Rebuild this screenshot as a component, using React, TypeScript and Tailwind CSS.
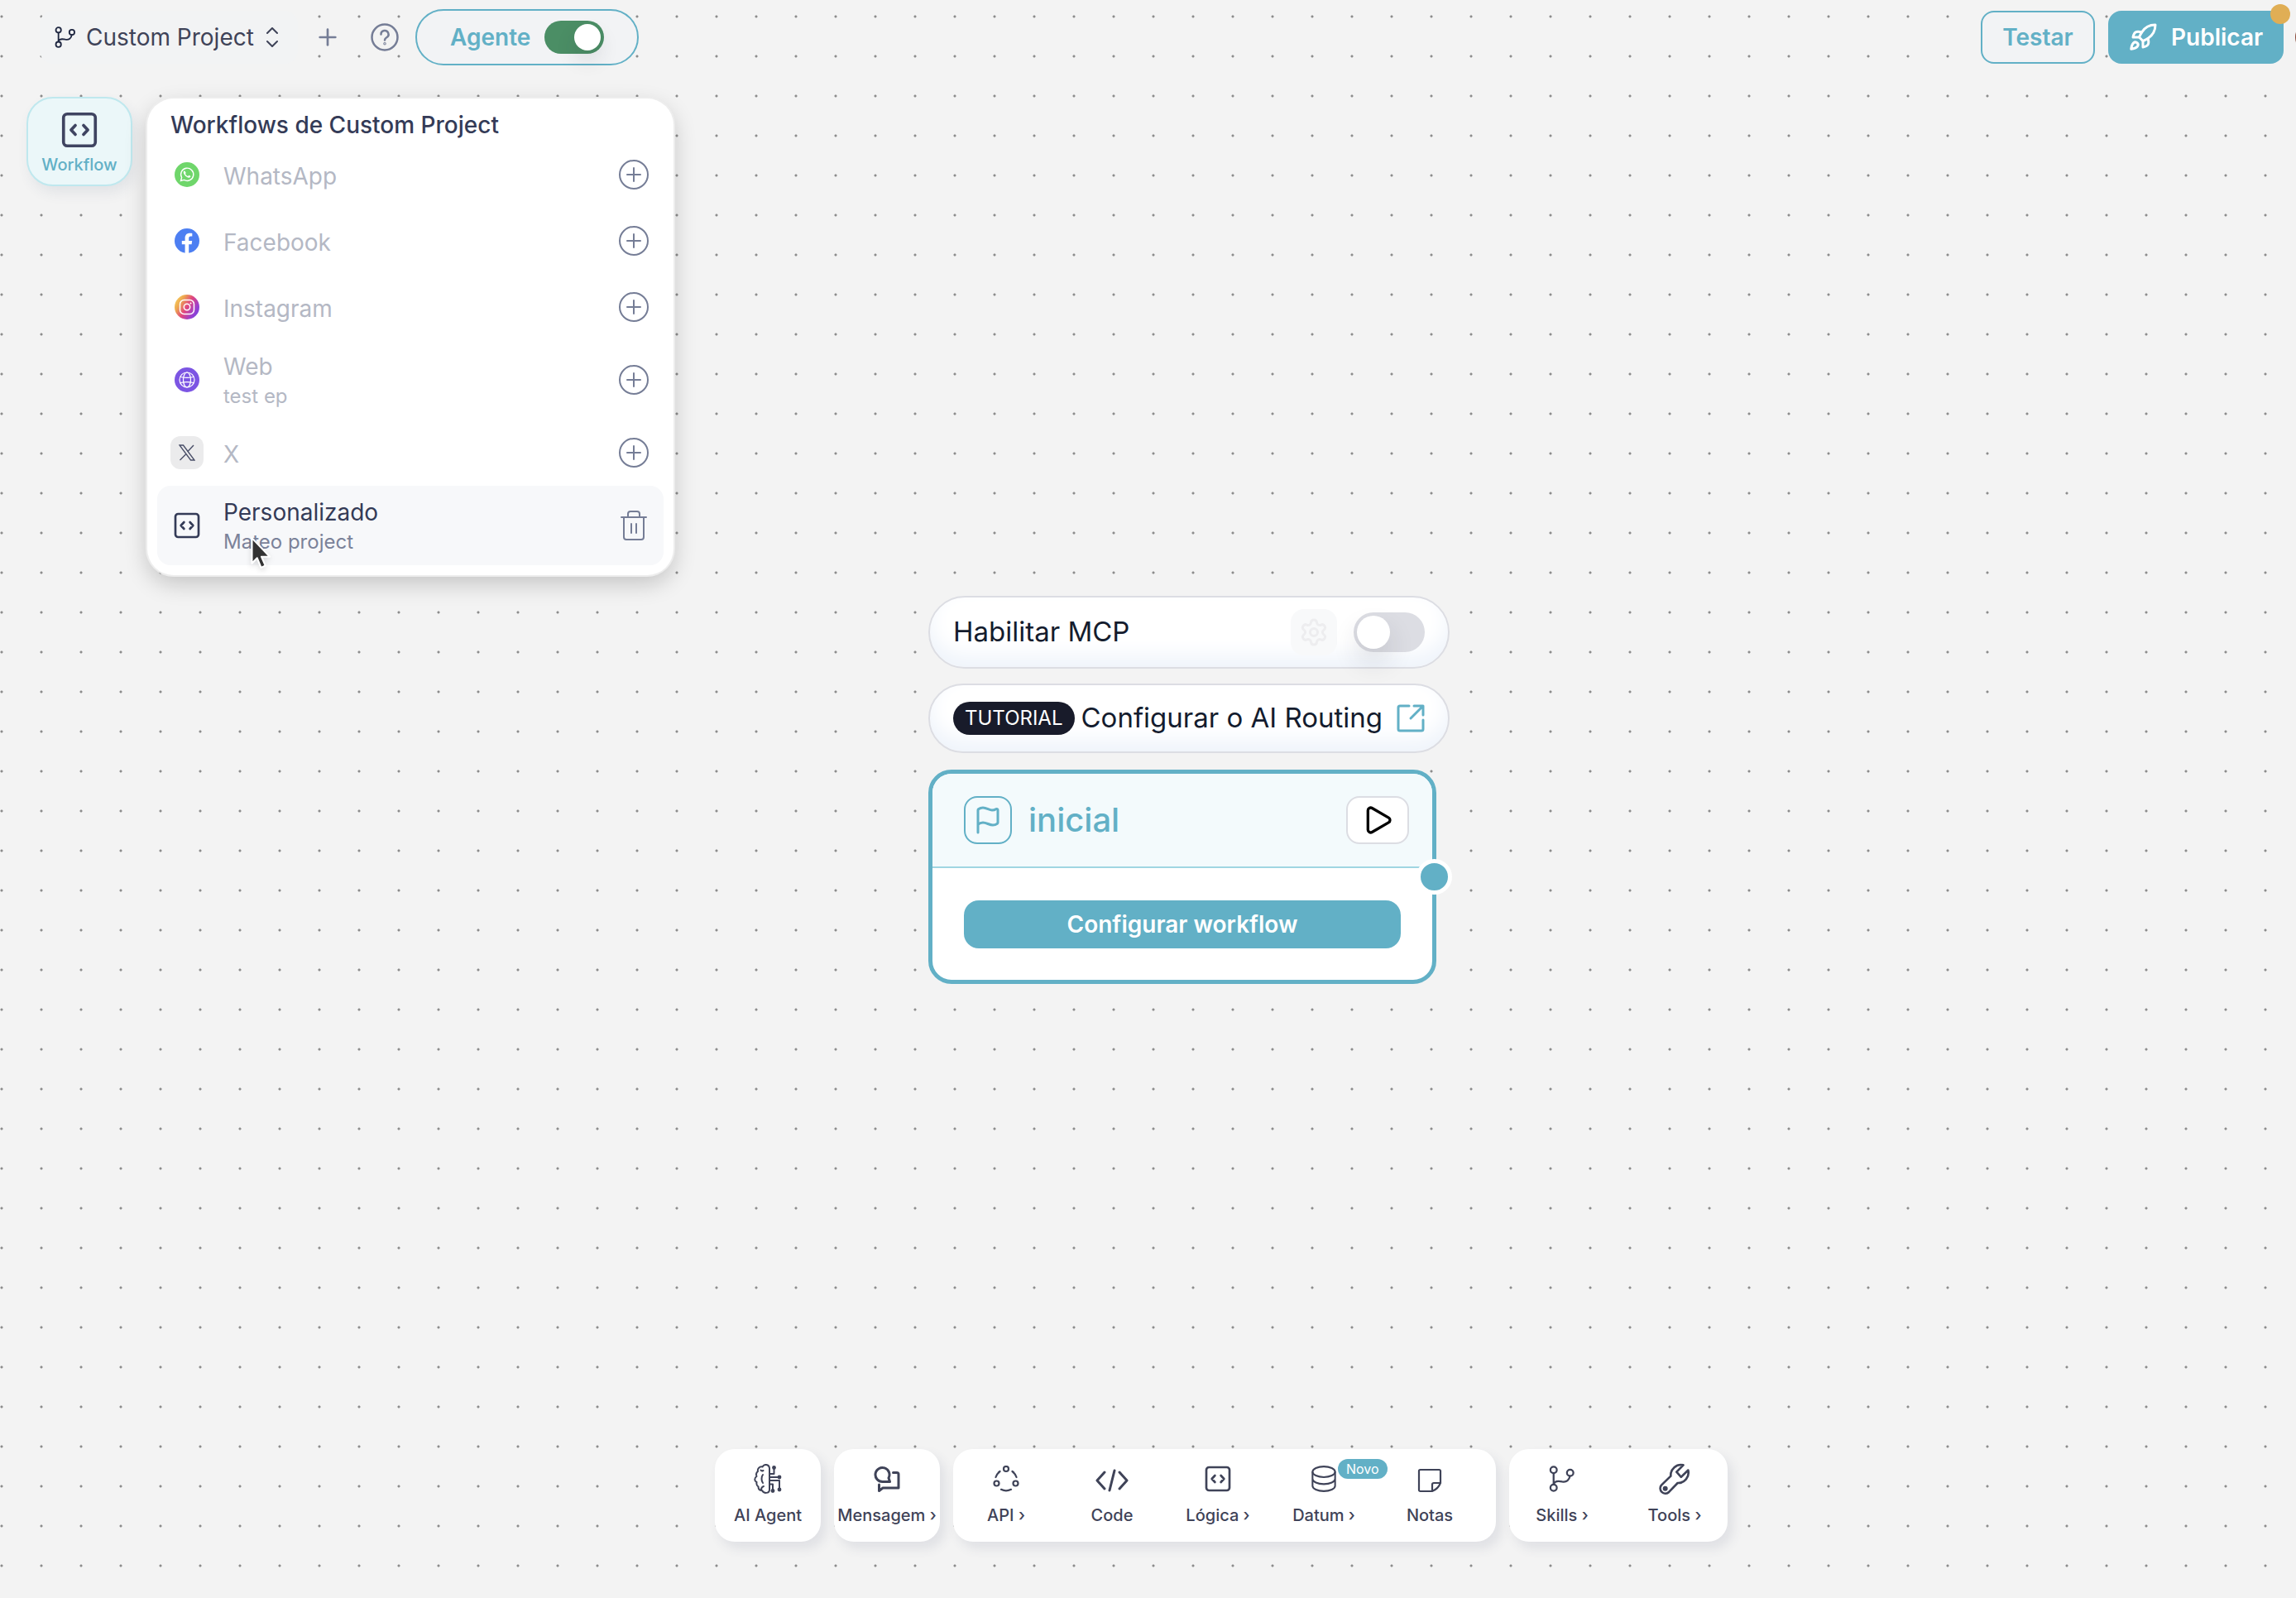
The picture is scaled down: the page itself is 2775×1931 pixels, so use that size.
import { useState } from 'react';
import type { ReactNode } from 'react';
import { Flag, Play, Plus, Rocket, Settings } from 'lucide-react';

type IconProps = { className?: string };

function BranchIcon({ className }: IconProps) {
  return (
    <svg viewBox="0 0 24 24" fill="none" stroke="currentColor" strokeWidth="1.700" strokeLinecap="round" className={className}>
      <circle cx="4.300" cy="4" r="2.900" />
      <circle cx="4.300" cy="20" r="2.900" />
      <circle cx="19.300" cy="6.500" r="2.900" />
      <path d="M4.300 7v10c.7-3.200 4-3.300 7.700-2.500 4.200.8 6.500-1.500 7.100-5" />
    </svg>
  );
}

function CodeBoxIcon({ className }: IconProps) {
  return (
    <svg viewBox="0 0 24 24" fill="none" stroke="currentColor" strokeWidth="2" strokeLinecap="round" strokeLinejoin="round" className={className}>
      <rect x="1.500" y="1.500" width="21" height="21" rx="2.500" />
      <path d="M9.300 9 6.500 12l2.800 3M14.700 9l2.800 3-2.800 3" />
    </svg>
  );
}

function SelectorIcon({ className }: IconProps) {
  return (
    <svg viewBox="0 0 16 24" fill="none" stroke="currentColor" strokeWidth="2" strokeLinecap="round" strokeLinejoin="round" className={className}>
      <path d="m2 7 6-6 6 6M2 17l6 6 6-6" />
    </svg>
  );
}

function HelpIcon({ className }: IconProps) {
  return (
    <svg viewBox="0 0 34 34" fill="none" stroke="currentColor" strokeWidth="2.500" strokeLinecap="round" className={className}>
      <circle cx="17" cy="17" r="15.500" />
      <path d="M12.500 13.500a4.500 4.500 0 1 1 6.800 3.800c-1.600 1-2.300 1.700-2.300 3.200" />
      <circle cx="17" cy="24.800" r=".5" />
    </svg>
  );
}

function AddIcon({ className }: IconProps) {
  return (
    <svg viewBox="0 0 40 40" fill="none" stroke="currentColor" strokeWidth="2" className={className}>
      <circle cx="20" cy="20" r="17" />
      <path d="M20 12v16M12 20h16" strokeLinecap="round" />
    </svg>
  );
}

function TrashIcon({ className }: IconProps) {
  return (
    <svg viewBox="0 0 40 40" fill="none" stroke="currentColor" strokeWidth="2" strokeLinecap="round" strokeLinejoin="round" className={className}>
      <path d="M5 10h30M8 10v24a3 3 0 0 0 3 3h18a3 3 0 0 0 3-3V10M13 10V6a3 3 0 0 1 3-3h8a3 3 0 0 1 3 3v4M17 18v11M23 18v11" />
    </svg>
  );
}

function WhatsAppIcon() {
  return (
    <svg viewBox="0 0 30 30" className="size-[30px]">
      <circle cx="15" cy="15" r="15" fill="#6fd66b" />
      <path d="m7.500 22.500 1.100-4a7.600 7.600 0 1 1 2.900 2.900z" fill="none" stroke="#fff" strokeWidth="1.400" />
      <path d="M12.600 11c-.3-.6-1.200-.6-1.600.1-1.500 2.400 3.400 8 6.500 7.700 1.200-.2 2-1 1.800-2l-2-1.100-1.200 1.200c-1.400-.4-2.600-1.700-3.100-2.900l.8-1z" fill="#fff" />
    </svg>
  );
}

function FacebookIcon() {
  return (
    <svg viewBox="0 0 30 30" className="size-[30px]">
      <circle cx="15" cy="15" r="15" fill="#4d7ff2" />
      <path d="M12.600 30V19.300H8.800v-4.200h3.800v-3.300c0-3.900 2.200-6 5.800-6 1.500 0 2.900.2 2.900.2v3.600h-1.800c-1.700 0-2.300 1.100-2.300 2.200v3.300h4l-.6 4.200h-3.400V30z" fill="#fff" />
    </svg>
  );
}

function InstagramIcon() {
  return (
    <svg viewBox="0 0 30 30" className="size-[30px]">
      <defs>
        <linearGradient id="ig" x1="0" y1=".2" x2="1" y2=".8">
          <stop offset="0" stopColor="#f7cf5f" />
          <stop offset=".22" stopColor="#eda84f" />
          <stop offset=".5" stopColor="#e0457f" />
          <stop offset=".8" stopColor="#9b3fd0" />
          <stop offset="1" stopColor="#6b45e0" />
        </linearGradient>
      </defs>
      <circle cx="15" cy="15" r="15" fill="url(#ig)" />
      <rect x="6.500" y="6.500" width="17" height="17" rx="5" fill="none" stroke="#fff" strokeWidth="1.500" />
      <circle cx="15" cy="15" r="3.700" fill="none" stroke="#fff" strokeWidth="1.500" />
      <circle cx="19.500" cy="10.500" r="1" fill="#fff" />
    </svg>
  );
}

function WebIcon() {
  return (
    <svg viewBox="0 0 30 30" className="size-[30px]">
      <circle cx="15" cy="15" r="15" fill="#7c55e3" />
      <g fill="none" stroke="#fff" strokeWidth="1.200">
        <circle cx="15" cy="15" r="9" />
        <ellipse cx="15" cy="15" rx="4.500" ry="9" />
        <path d="M7 11.500c5 1.200 11 1.200 16 0M7 18.500c5-1.200 11-1.200 16 0" />
      </g>
    </svg>
  );
}

function XIcon() {
  return (
    <span className="flex size-10 items-center justify-center rounded-xl bg-[#ebebec]">
      <svg viewBox="0 0 20 20" fill="none" stroke="#4a4f68" strokeWidth="1.400" className="size-5">
        <path d="M1 1h4.500l13.500 18h-4.500zM18 1l-7.500 8M9 11.500 1.500 19" />
      </svg>
    </span>
  );
}

function BrainIcon({ className }: IconProps) {
  return (
    <svg viewBox="0 0 36 36" fill="none" stroke="currentColor" strokeWidth="2" strokeLinecap="round" strokeLinejoin="round" className={className}>
      <path d="M20 31V5a4.500 4.500 0 0 0-8.500-1.500A4.500 4.500 0 0 0 6 9c-2 1.500-2.500 3.500-1.500 6-3 2-3 5.500 0 7-.5 3 0 4.500 2 5.500 0 3 2 4.500 4.500 4.500 2 4 9 4 9-1z" />
      <path d="M12.500 8c-1 .5-2 1-3-.5M12 13c-2 2.500-2 7.500 0 10M10 31c.2-2 1.200-3.500 3-4" />
      <path d="M20 12h5.500V5.500M20 16h12M20 20h12v10.500M20 24.500h4V31" />
      <g fill="currentColor" stroke="none">
        <circle cx="25.500" cy="4.500" r="2.400" />
        <circle cx="32" cy="16" r="2.400" />
        <circle cx="32" cy="31" r="2.400" />
        <circle cx="24" cy="32.500" r="2.400" />
      </g>
    </svg>
  );
}

function MessageIcon({ className }: IconProps) {
  return (
    <svg viewBox="0 0 32 32" fill="none" stroke="currentColor" strokeWidth="3" strokeLinecap="round" strokeLinejoin="round" className={className}>
      <path d="M19.500 19.500H10.500a8.500 8.500 0 1 1 7.500-4.500z" />
      <path d="M23.500 8.500H28a2 2 0 0 1 2 2V27H11l-4.500 3.500V23" />
    </svg>
  );
}

function ApiIcon({ className }: IconProps) {
  return (
    <svg viewBox="0 0 32 32" fill="none" stroke="currentColor" strokeWidth="2.200" strokeLinecap="round" className={className}>
      <circle cx="16" cy="4" r="3" />
      <circle cx="4.500" cy="21.500" r="3" />
      <circle cx="27.500" cy="21.500" r="3" />
      <path d="M3.500 14c1-3 2.500-5.200 5-7M28.500 14c-1-3-2.500-5.200-5-7M10 28.800c4 2 8 2 12 0" />
    </svg>
  );
}

function CodeIcon({ className }: IconProps) {
  return (
    <svg viewBox="0 0 40 32" fill="none" stroke="currentColor" strokeWidth="3" strokeLinecap="round" strokeLinejoin="round" className={className}>
      <path d="M11 8 2 18l9 10M29 8l9 10-9 10M23 6l-6 24" />
    </svg>
  );
}

function DatabaseIcon({ className }: IconProps) {
  return (
    <svg viewBox="0 0 32 34" fill="none" stroke="currentColor" strokeWidth="2.200" className={className}>
      <ellipse cx="16" cy="8" rx="14.500" ry="6.800" />
      <path d="M1.500 8v18c0 3.700 6.500 6.800 14.500 6.800S30.500 29.700 30.500 26V8M1.500 17c0 3.700 6.500 6.800 14.500 6.800S30.500 20.700 30.500 17" />
    </svg>
  );
}

function NoteIcon({ className }: IconProps) {
  return (
    <svg viewBox="0 0 30 30" fill="none" stroke="currentColor" strokeWidth="2.200" strokeLinejoin="round" className={className}>
      <path d="M3.500 2h23A1.500 1.500 0 0 1 28 3.500V18c-2 5-5 8-10 10H3.500A1.500 1.500 0 0 1 2 26.500v-23A1.500 1.500 0 0 1 3.500 2zM28 18h-8a2 2 0 0 0-2 2v8" />
    </svg>
  );
}

function WrenchIcon({ className }: IconProps) {
  return (
    <svg viewBox="0 0 24 24" fill="none" stroke="currentColor" strokeWidth="1.600" strokeLinejoin="round" className={className}>
      <path d="M18.300 2A7.500 7.500 0 0 0 9.200 10l-6.800 6.600a3.700 3.700 0 0 0 5.200 5.200l6.600-6.800a7.500 7.500 0 0 0 7.600-9.300l-5.100 5L13.400 7z" />
      <circle cx="5.200" cy="19" r="1" fill="currentColor" />
    </svg>
  );
}

function ExternalIcon({ className }: IconProps) {
  return (
    <svg viewBox="0 0 34 34" fill="none" stroke="currentColor" strokeWidth="3" strokeLinecap="round" strokeLinejoin="round" className={className}>
      <path d="M15 2H4a2 2 0 0 0-2 2v26a2 2 0 0 0 2 2h26a2 2 0 0 0 2-2V19M17 17 31 3M21 2h11v11" />
    </svg>
  );
}

function Cursor() {
  return (
    <svg viewBox="0 0 24 38" className="pointer-events-none absolute top-[61px] left-[112px] h-10 w-[26px] drop-shadow-md" aria-hidden="true">
      <path d="M2 2v29l6-6 4.500 11 5-2.200L13 23.500h9.500z" fill="#333" stroke="#fff" strokeWidth="2" strokeLinejoin="round" />
    </svg>
  );
}

type Channel = { name: string; detail?: string; icon: ReactNode; active?: boolean };

const channels: Channel[] = [
  { name: 'WhatsApp', icon: <WhatsAppIcon /> },
  { name: 'Facebook', icon: <FacebookIcon /> },
  { name: 'Instagram', icon: <InstagramIcon /> },
  { name: 'Web', detail: 'test ep', icon: <WebIcon /> },
  { name: 'X', icon: <XIcon /> },
  { name: 'Personalizado', detail: 'Mateo project', icon: <CodeBoxIcon className="size-8" />, active: true },
];

function ChannelRow({ name, detail, icon, active }: Channel) {
  return (
    <li className={`relative flex items-center rounded-2xl px-4 ${detail ? 'h-24' : 'h-20'} ${active ? 'bg-[#f7f8fa] text-[#343b57]' : 'text-[#b4b8c4]'}`}>
      <span className="flex w-10 justify-center">{icon}</span>
      <span className="ml-6 flex flex-1 flex-col pt-1">
        <span className="text-[28px] leading-9">{name}</span>
        {detail && <span className={`text-2xl leading-9 ${active ? 'text-[#7b8299]' : ''}`}>{detail}</span>}
      </span>
      <button aria-label={active ? `Excluir ${name}` : `Adicionar ${name}`} className="text-[#757d96]">
        {active ? <TrashIcon className="size-10" /> : <AddIcon className="size-10" />}
      </button>
      {active && <Cursor />}
    </li>
  );
}

function Tool({ label, icon, menu, badge }: { label: string; icon: ReactNode; menu?: boolean; badge?: string }) {
  return (
    <button className="relative flex w-32 flex-col items-center gap-[10px] pt-4 text-[#3f4358]">
      <span className="flex h-10 items-center">{icon}</span>
      <span className="text-xl leading-7 font-medium whitespace-nowrap">{label}{menu && ' ›'}</span>
      {badge && (
        <span className="absolute top-3 left-[81px] rounded-xl bg-[#62b0c6] px-[10px] text-base leading-6 text-white">{badge}</span>
      )}
    </button>
  );
}

function ToolCard({ children, className = '' }: { children: ReactNode; className?: string }) {
  return <div className={`flex h-28 rounded-3xl bg-white shadow-[6px_8px_14px_rgba(60,75,110,0.11)] ${className}`}>{children}</div>;
}

export default function App() {
  const [agent, setAgent] = useState(true);
  const [mcp, setMcp] = useState(false);

  return (
    <div className="relative flex min-h-screen flex-col overflow-hidden bg-[#f3f3f3] bg-[radial-gradient(circle,#8c8c8c_1px,transparent_2px)] bg-size-[48px_48px] bg-position-[-22px_-4px] font-['Inter',sans-serif]">
      <header className="relative flex items-start justify-between pt-[11px] pr-[15px] pl-12">
        <div className="flex items-center">
          <button className="flex h-16 w-[312px] items-center rounded-2xl bg-[#f2f3f4] pl-[18px] text-[28px] text-[#3f4358]">
            <BranchIcon className="mr-3 size-[26px] text-[#1e2640]" />
            Custom Project
            <SelectorIcon className="ml-3 h-6 w-5" />
          </button>
          <button aria-label="Novo projeto" className="ml-5 text-[#757d96]"><Plus className="size-8" /></button>
          <button aria-label="Ajuda" className="ml-9 text-[#757d96]"><HelpIcon className="size-[34px]" /></button>
          <label className="ml-5 flex h-[68px] w-[270px] items-center justify-between rounded-full border-2 border-[#62b0c6] bg-[#f2f3f5] px-10 text-[28px] font-semibold text-[#62b0c6]">
            Agente
            <input type="checkbox" className="peer sr-only" checked={agent} onChange={() => setAgent(!agent)} />
            <span className="flex h-10 w-[72px] items-center rounded-full bg-[#dcdde3] p-1 peer-checked:justify-end peer-checked:bg-[#4b8e65]">
              <span className="size-8 rounded-full bg-white shadow-[0_12px_24px_rgba(39,39,60,0.12)]" />
            </span>
          </label>
        </div>
        <div className="flex gap-4 pt-[2px]">
          <button className="h-16 w-[138px] rounded-2xl border-2 border-[#62b0c6] bg-[#f2f3f5] text-[28px] font-semibold text-[#62b0c6]">Testar</button>
          <button className="relative flex h-16 w-[212px] items-center rounded-2xl bg-[#62b0c6] pl-6 text-[28px] font-semibold text-white">
            <Rocket className="mr-4 size-9" />
            Publicar
            <span className="absolute -top-2 -right-2 size-6 rounded-full bg-[#e0ae55]" />
          </button>
        </div>
        <span className="absolute top-[25px] -right-[39px] size-10 rounded-full bg-[#8a4b3a]" />
      </header>

      <div className="flex items-start gap-[18px] pt-[38px] pl-8">
        <button className="flex h-[108px] w-32 flex-col items-center rounded-[32px] border-2 border-[#bfe8ee] bg-[#ebf7f9] pt-4 shadow-[4px_8px_16px_rgba(60,75,110,0.09)]">
          <CodeBoxIcon className="size-11 text-[#3f4461]" />
          <span className="mt-[6px] text-xl leading-7 font-medium text-[#62b0c6]">Workflow</span>
        </button>
        <section className="mt-[2px] w-[636px] rounded-[32px] bg-white px-3 pb-3 shadow-[0_0_0_2px_#ededed,0_10px_28px_rgba(0,0,0,0.2)]">
          <h2 className="px-4 pt-[14px] pb-[2px] text-[28px] leading-9 font-medium text-[#343b57]">Workflows de Custom Project</h2>
          <ul>
            {channels.map((channel) => <ChannelRow key={channel.name} {...channel} />)}
          </ul>
        </section>
      </div>

      {/* Start node and its options, placed on the canvas */}
      <main className="absolute top-[720px] left-[1122px] flex w-[630px] flex-col">
        <div className="flex h-[88px] items-center rounded-full border-2 border-[#dcdde3] bg-white px-7 shadow-[inset_0_-14px_24px_#eff4fb]">
          <span id="mcp" className="flex-1 text-[33px] text-[#141c2e]">Habilitar MCP</span>
          <button aria-label="Configurações" className="mr-5 flex size-14 items-center justify-center rounded-2xl bg-[#f8f9fa] text-[#ededef]">
            <Settings className="size-9" />
          </button>
          <label>
            <input type="checkbox" aria-labelledby="mcp" className="peer sr-only" checked={mcp} onChange={() => setMcp(!mcp)} />
            <span className="flex h-12 w-[86px] items-center rounded-full bg-[#dcdde3] p-1 peer-checked:justify-end peer-checked:bg-[#4b8e65]">
              <span className="size-10 rounded-full bg-white shadow-[0_16px_32px_rgba(39,39,60,0.14)]" />
            </span>
          </label>
        </div>
        <a href="#tutorial" className="mt-[18px] flex h-[84px] items-center rounded-full border-2 border-[#dcdde3] bg-white px-7 text-[#141c2e] shadow-[inset_0_-14px_24px_#eff4fb]">
          <span className="rounded-full bg-[#181b2a] px-[14px] text-2xl leading-10 text-white">TUTORIAL</span>
          <span className="ml-2 flex-1 text-[33px] whitespace-nowrap">Configurar o AI Routing</span>
          <ExternalIcon className="size-[34px] text-[#62b0c6]" />
        </a>
        <section className="relative mt-5 w-[614px] rounded-[28px] border-[5px] border-[#62b0c6] bg-white">
          <div className="flex h-[114px] items-center rounded-t-[23px] border-b-2 border-[#a0d6e2] bg-[#f3fafc] pr-7 pl-[38px]">
            <span className="flex size-[58px] items-center justify-center rounded-2xl border-2 border-[#62b0c6] text-[#62b0c6]">
              <Flag className="size-9" />
            </span>
            <h3 className="ml-5 flex-1 text-[40px] font-medium text-[#62b0c6]">inicial</h3>
            <button aria-label="Executar" className="flex h-[58px] w-[76px] items-center justify-center rounded-2xl border-2 border-[#dcdde3] bg-white text-black">
              <Play className="size-10" />
            </button>
          </div>
          <div className="h-[135px] px-[38px] pt-[39px]">
            <button className="h-[58px] w-full rounded-[18px] bg-[#62b0c6] text-[28px] font-semibold text-white">Configurar workflow</button>
          </div>
          <span className="absolute top-[103px] -right-6 size-[43px] rounded-full border-[5px] border-white bg-[#62b0c6]" />
        </section>
      </main>

      <nav className="mt-auto flex justify-center gap-4 pb-[68px] pl-[177px]">
        <ToolCard><Tool label="AI Agent" icon={<BrainIcon className="size-9" />} /></ToolCard>
        <ToolCard><Tool label="Mensagem" menu icon={<MessageIcon className="size-8" />} /></ToolCard>
        <ToolCard className="pr-4">
          <Tool label="API" menu icon={<ApiIcon className="size-8" />} />
          <Tool label="Code" icon={<CodeIcon className="h-8 w-10" />} />
          <Tool label="Lógica" menu icon={<CodeBoxIcon className="size-8" />} />
          <Tool label="Datum" menu badge="Novo" icon={<DatabaseIcon className="size-8" />} />
          <Tool label="Notas" icon={<NoteIcon className="mt-1 size-[30px]" />} />
        </ToolCard>
        <ToolCard className="gap-2">
          <Tool label="Skills" menu icon={<BranchIcon className="size-8" />} />
          <Tool label="Tools" menu icon={<WrenchIcon className="size-10" />} />
        </ToolCard>
      </nav>
    </div>
  );
}
